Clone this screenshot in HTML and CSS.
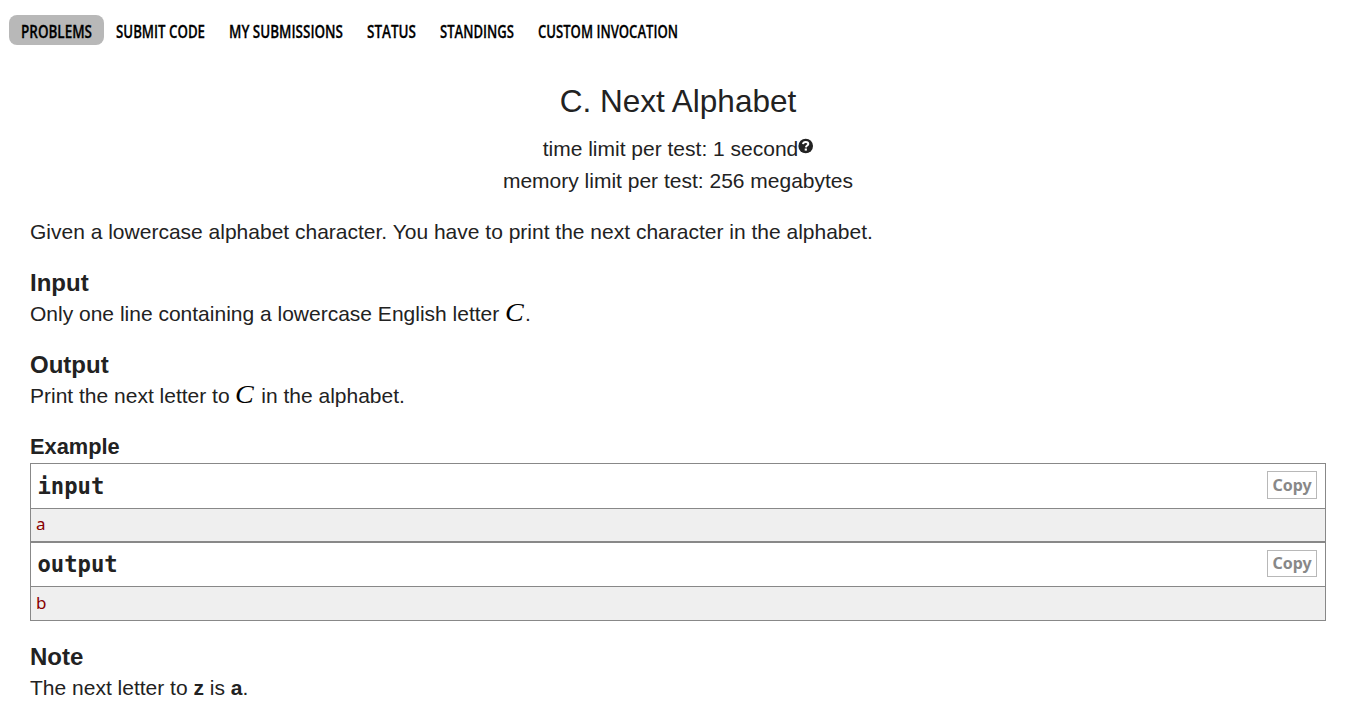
FILE: index.html
```html
<!DOCTYPE html>
<html lang="en">
<head>
<meta charset="utf-8">
<title>C. Next Alphabet</title>
<link rel="stylesheet" href="styles.css">
</head>
<body>
<nav class="menu">
<a class="tab active"><svg width="71" height="30"><text x="0" y="23" textLength="71" lengthAdjust="spacingAndGlyphs">PROBLEMS</text></svg></a>
<a class="tab"><svg width="89" height="30"><text x="0" y="23" textLength="89" lengthAdjust="spacingAndGlyphs">SUBMIT CODE</text></svg></a>
<a class="tab"><svg width="114" height="30"><text x="0" y="23" textLength="114" lengthAdjust="spacingAndGlyphs">MY SUBMISSIONS</text></svg></a>
<a class="tab"><svg width="49" height="30"><text x="0" y="23" textLength="49" lengthAdjust="spacingAndGlyphs">STATUS</text></svg></a>
<a class="tab"><svg width="74" height="30"><text x="0" y="23" textLength="74" lengthAdjust="spacingAndGlyphs">STANDINGS</text></svg></a>
<a class="tab"><svg width="140" height="30"><text x="0" y="23" textLength="140" lengthAdjust="spacingAndGlyphs">CUSTOM INVOCATION</text></svg></a>
</nav>
<main class="statement">
<header class="header">
<h1 class="title">C. Next Alphabet</h1>
<div class="limit">time limit per test: 1 second<svg class="help" width="15" height="16" viewBox="0.5 0 15 16"><circle cx="8.2" cy="8" r="7.3" fill="#222"/><path d="M5.5 6.2C5.7 4.5 6.8 3.9 8.2 3.9C9.8 3.9 10.8 4.8 10.8 5.9C10.8 7.5 8.6 7.6 8.4 9.4" fill="none" stroke="#fff" stroke-width="2"/><path d="M7.2 10.5h2.2v2.1h-2.2z" fill="#fff"/></svg></div>
<div class="limit">memory limit per test: 256 megabytes</div>
</header>
<p class="text intro">Given a lowercase alphabet character. You have to print the next character in the alphabet.</p>
<section class="section">
<h2 class="heading">Input</h2>
<p class="text">Only one line containing a lowercase English letter <span class="math">C</span>.</p>
</section>
<section class="section">
<h2 class="heading">Output</h2>
<p class="text">Print the next letter to <span class="math">C</span> in the alphabet.</p>
</section>
<section class="samples">
<h2 class="heading example">Example</h2>
<div class="sample">
<div class="bar"><span class="name">input</span><span class="copy">Copy</span></div>
<pre class="data">a</pre>
</div>
<div class="sample second">
<div class="bar"><span class="name">output</span><span class="copy">Copy</span></div>
<pre class="data">b</pre>
</div>
</section>
<section class="note">
<h2 class="heading">Note</h2>
<p class="text">The next letter to <b>z</b> is <b>a</b>.</p>
</section>
</main>
</body>
</html>
```
FILE: styles.css
```css
* { box-sizing: border-box; }
body { margin: 0; height: 711px; overflow: hidden; background: #fff; color: #222; font-family: "Liberation Sans", Arial, sans-serif; font-size: 21px; }
h1, h2, p, pre { margin: 0; }
.menu { display: flex; padding: 15px 0 0 9px; height: 45px; }
.tab { display: flex; height: 30px; padding: 0 12px; border-radius: 8px; }
.tab svg { overflow: visible; font: 600 18px "Open Sans", "Noto Sans", sans-serif; fill: #000; stroke: #000; stroke-width: 0.3px; }
.active { background: #b8b8b8; }
.statement { padding: 0 30px; }
.header { text-align: center; padding-top: 36px; }
.title { font-size: 31.5px; font-weight: 400; line-height: 40px; margin-bottom: 12px; }
.limit { height: 32px; line-height: 32px; }
.help { vertical-align: 2px; }
.text { height: 32px; line-height: 32px; white-space: nowrap; }
.intro { margin-top: 19px; }
.section { margin-top: 19px; height: 63px; }
.heading { font-size: 24px; line-height: 31px; height: 31px; font-weight: bold; }
.math { font: italic 26px/20px "Liberation Serif", serif; color: #000; display: inline-block; width: 18px; margin-right: 2px; transform: scaleX(1.08); transform-origin: left; }
.samples { margin-top: 20px; }
.example { font-size: 21.8px; height: 31px; line-height: 30px; }
.sample { border: 1px solid #888; height: 79px; }
.bar { display: flex; justify-content: space-between; align-items: flex-start; height: 45px; padding: 7px 8px 0 6.5px; border-bottom: 1px solid #888; }
.name { font: bold 22.2px/30px "DejaVu Sans Mono", monospace; }
.copy { width: 50px; height: 28px; border: 1px solid #b8b8b8; color: #888; font: bold 16px/26px "Noto Sans", sans-serif; text-align: center; }
.data { height: 32px; padding-left: 5px; background: #efefef; color: #880000; font: 17px/30px "Noto Sans", sans-serif; }
.second .bar { height: 44px; }
.second .name { line-height: 29px; }
.second .copy { height: 27px; line-height: 25px; }
.second .data { height: 33px; line-height: 32px; }
.note { margin-top: 20px; }
```
